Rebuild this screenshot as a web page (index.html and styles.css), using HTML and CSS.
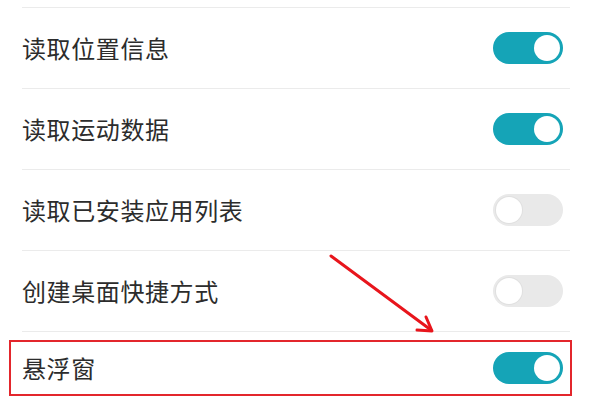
FILE: index.html
```html
<!DOCTYPE html>
<html lang="zh">
<head>
<meta charset="utf-8">
<link rel="stylesheet" href="styles.css">
</head>
<body>
<div class="page">
  <ul class="list">
    <li class="row"><span class="label">读取位置信息</span><span class="switch on"><span class="knob"></span></span></li>
    <li class="row"><span class="label">读取运动数据</span><span class="switch on"><span class="knob"></span></span></li>
    <li class="row"><span class="label">读取已安装应用列表</span><span class="switch off"><span class="knob"></span></span></li>
    <li class="row"><span class="label">创建桌面快捷方式</span><span class="switch off"><span class="knob"></span></span></li>
    <li class="row last">
      <div class="highlight"><span class="label">悬浮窗</span><span class="switch on"><span class="knob"></span></span></div>
    </li>
  </ul>
  <svg class="arrow" width="591" height="407" viewBox="0 0 591 407">
    <line x1="331" y1="256" x2="431" y2="330" stroke="#e8151c" stroke-width="3" stroke-linecap="round"/>
    <polyline points="417,330 432,331 426,317" fill="none" stroke="#e8151c" stroke-width="3" stroke-linecap="round" stroke-linejoin="round"/>
  </svg>
</div>
</body>
</html>
```
FILE: styles.css
```css
html, body {
  margin: 0;
  padding: 0;
  background: #ffffff;
}
.page {
  position: relative;
  width: 591px;
  height: 407px;
  overflow: hidden;
  font-family: "Noto Sans CJK SC", "Noto Sans", sans-serif;
}
.list {
  list-style: none;
  margin: 0;
  padding: 7px 21px 0 22px;
}
.row {
  display: flex;
  align-items: center;
  justify-content: space-between;
  height: 80px;
  border-top: 1px solid #ebebeb;
  padding-right: 7px;
}
.row.last {
  display: block;
  height: auto;
  padding-right: 0;
}
.highlight {
  display: flex;
  align-items: center;
  justify-content: space-between;
  height: 52px;
  margin: 8px -2px 0 -13px;
  padding: 0 7px 0 11px;
  border: 2px solid #e3262c;
}
.label {
  font-size: 24px;
  letter-spacing: 0.6px;
  color: #2c2c2c;
  line-height: 1;
}
.switch {
  position: relative;
  display: flex;
  align-items: center;
  width: 70px;
  height: 32px;
  border-radius: 16px;
  box-sizing: border-box;
  padding: 0 3px;
}
.switch.on {
  background: #15a4b7;
  justify-content: flex-end;
}
.switch.off {
  background: #e9e9e9;
  justify-content: flex-start;
}
.knob {
  width: 26px;
  height: 26px;
  border-radius: 50%;
  background: #ffffff;
}
.switch.off .knob {
  box-shadow: 0 0 0 1px #e0e0e0;
}
.arrow {
  position: absolute;
  left: 0;
  top: 0;
  pointer-events: none;
}
```
